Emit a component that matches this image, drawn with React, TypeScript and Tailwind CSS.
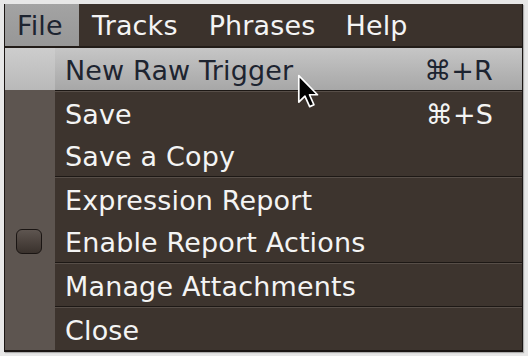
import React from 'react';

type Item = {
  label: string;
  shortcut?: string;
  checkbox?: boolean;
  highlighted?: boolean;
  sepAfter?: boolean;
};

const items: Item[] = [
  { label: 'New Raw Trigger', shortcut: '⌘+R', highlighted: true, sepAfter: true },
  { label: 'Save', shortcut: '⌘+S' },
  { label: 'Save a Copy', sepAfter: true },
  { label: 'Expression Report' },
  { label: 'Enable Report Actions', checkbox: true, sepAfter: true },
  { label: 'Manage Attachments', sepAfter: true },
  { label: 'Close' },
];

const font = { fontFamily: '"DejaVu Sans", Verdana, sans-serif' };

const MenuRow = ({ item }: { item: Item }) => {
  const hl = item.highlighted;
  return (
    <div className="flex h-[42px]">
      <div
        className={`w-[50px] flex items-center justify-center ${
          hl ? 'bg-gradient-to-b from-[#cdcdcd] to-[#b9b9b9]' : 'bg-[#5d5550]'
        }`}
      >
        {item.checkbox && (
          <div className="w-[26px] h-[25px] rounded-[6px] border border-[#1a1513] bg-gradient-to-b from-[#5e5550] to-[#3a322d] ml-[-2px]" />
        )}
      </div>
      <div
        className={`flex-1 flex items-center justify-between pl-[10px] pr-[29px] pt-[2px] ${
          hl
            ? 'bg-gradient-to-b from-[#c6c6c6] to-[#a7a7a7] text-[#1d2430]'
            : 'bg-[#3d342e] text-[#f4f4f4]'
        }`}
      >
        <span>{item.label}</span>
        {item.shortcut && <span>{item.shortcut}</span>}
      </div>
    </div>
  );
};

const Separator = () => (
  <div className="flex h-[2px]">
    <div className="w-[50px] bg-[#5d5550]" />
    <div className="flex-1 flex flex-col">
      <div className="h-[1px] bg-[#1d1815]" />
      <div className="h-[1px] bg-[#574e48]" />
    </div>
  </div>
);

export default function App() {
  return (
    <div className="relative w-[528px] h-[356px] bg-[#e7e7e7] pt-[4px] pl-[4px]" style={font}>
      <div className="w-[519px] h-[348px] flex flex-col border-l border-r border-b-2 border-[#1b1614] bg-[#3d342e] text-[27px] tracking-[0.15px] leading-none shadow-[1px_1px_1px_rgba(0,0,0,0.25)]">
        <div className="flex items-stretch h-[42px] bg-[#3b322c] text-[#f4f4f4]">
          <div className="w-[74px] flex items-center pl-[12px] pt-[1px] bg-gradient-to-b from-[#a3a3a3] to-[#979797] text-[#1d2430]">
            File
          </div>
          <div className="flex items-center pt-[1px] ml-[13px]">Tracks</div>
          <div className="flex items-center pt-[1px] ml-[31px]">Phrases</div>
          <div className="flex items-center pt-[1px] ml-[30px]">Help</div>
        </div>
        <div className="h-[2px] flex">
          <div className="w-full bg-[#221c18]" />
        </div>
        {items.map((it, i) => (
          <React.Fragment key={i}>
            <MenuRow item={it} />
            {it.sepAfter && <Separator />}
          </React.Fragment>
        ))}
      </div>
      <svg
        className="absolute left-[297px] top-[74px]"
        width="24"
        height="34"
        viewBox="0 0 14 20"
      >
        <path
          d="M1 1 L1 16.5 L4.6 13 L7.4 19.2 L9.9 18.1 L7.3 12.2 L12 12.2 Z"
          fill="#000"
          stroke="#fff"
          strokeWidth="1"
          strokeLinejoin="round"
        />
      </svg>
    </div>
  );
}
